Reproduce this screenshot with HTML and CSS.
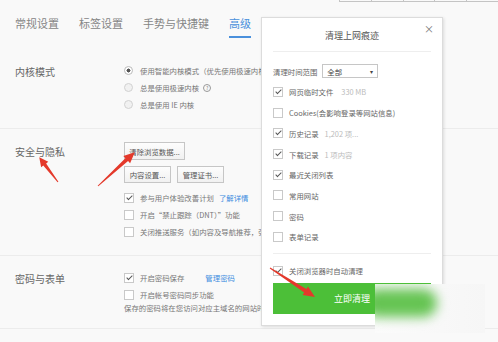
FILE: index.html
```html
<!DOCTYPE html>
<html lang="zh-CN">
<head>
    <meta charset="UTF-8">
    <meta name="viewport" content="width=device-width, initial-scale=1.0">
    <title>高级设置</title>
    <link rel="stylesheet" href="styles.css">
</head>
<body>
<div class="page">
    <div class="toolbar"><span></span><span></span><span></span><span></span><span></span></div>
    <nav class="tabs">
        <span class="tab">常规设置</span>
        <span class="tab">标签设置</span>
        <span class="tab">手势与快捷键</span>
        <span class="tab active">高级</span>
    </nav>

    <section class="group kernel">
        <div class="label">内核模式</div>
        <div class="options">
            <div class="row"><i class="radio on"></i>使用智能内核模式（优先使用极速内核）</div>
            <div class="row"><i class="radio"></i>总是使用极速内核<span class="help">?</span></div>
            <div class="row"><i class="radio"></i>总是使用 IE 内核</div>
        </div>
    </section>

    <section class="group">
        <div class="label">安全与隐私</div>
        <div class="options">
            <div class="btn-row first"><span class="btn wide">清除浏览数据...</span></div>
            <div class="btn-row"><span class="btn">内容设置...</span><span class="btn">管理证书...</span></div>
            <div class="row"><i class="cb on"></i>参与用户体验改善计划<a class="link">了解详情</a></div>
            <div class="row"><i class="cb"></i>开启“禁止跟踪（DNT）”功能</div>
            <div class="row"><i class="cb"></i>关闭推送服务（如内容及导航推荐，弹窗等）</div>
        </div>
    </section>

    <section class="group">
        <div class="label">密码与表单</div>
        <div class="options">
            <div class="row"><i class="cb on"></i>开启密码保存<a class="link far">管理密码</a></div>
            <div class="row"><i class="cb"></i>开启帐号密码同步功能</div>
            <div class="note">保存的密码将在您访问对应主域名的网站时自动填充</div>
        </div>
    </section>
</div>

<div class="dialog">
    <span class="close">×</span>
    <div class="dlg-title">清理上网痕迹</div>
    <div class="range">
        清理时间范围
        <span class="select">全部<b>▾</b></span>
    </div>
    <div class="items">
        <div class="item"><i class="cb on"></i>网页临时文件<em class="size">330 MB</em></div>
        <div class="item"><i class="cb"></i>Cookies(会影响登录等网站信息)</div>
        <div class="item"><i class="cb on"></i>历史记录<em>1,202 项...</em></div>
        <div class="item"><i class="cb on"></i>下载记录<em>1 项内容</em></div>
        <div class="item"><i class="cb on"></i>最近关闭列表</div>
        <div class="item"><i class="cb"></i>常用网站</div>
        <div class="item"><i class="cb"></i>密码</div>
        <div class="item"><i class="cb"></i>表单记录</div>
    </div>
    <div class="item auto"><i class="cb on"></i>关闭浏览器时自动清理</div>
    <div class="go">立即清理</div>
</div>

<div class="smudge"></div>

<svg class="arrows" width="498" height="342" viewBox="0 0 498 342">
    <g fill="#e4392b">
        <polygon transform="translate(58 182) rotate(-127.2)" points="0,-0.5 22,-1.8 22,-4.5 31,0 22,4.5 22,1.8 0,0.5"/>
        <polygon transform="translate(98 186) rotate(-42.6)" points="0,-0.5 39,-2 39,-5 50,0 39,5 39,2 0,0.5"/>
        <polygon transform="translate(270 268) rotate(32.8)" points="0,-0.5 42,-2 42,-5 53.5,0 42,5 42,2 0,0.5"/>
    </g>
</svg>
</body>
</html>
```

FILE: styles.css
```css
body {
  margin: 0;
  width: 498px;
  height: 342px;
  overflow: hidden;
  position: relative;
  font-family: "Noto Sans CJK SC", sans-serif;
  color: #666;
  background-color: #f9f9f9;
}

.toolbar {
  display: flex;
  margin-left: 339px;
  height: 1px;
  border-bottom: 1px solid #c4c4c4;
}

.toolbar span {
  width: 33px;
  border-left: 1px solid #c4c4c4;
}

.tabs {
  display: flex;
  gap: 20px;
  padding-left: 15px;
}

.tab {
  padding: 14px 0 6px;
  font-size: 11px;
  line-height: 14px;
  color: #858585;
  border-bottom: 2px solid transparent;
}

.tab.active {
  color: #4a90dc;
  border-bottom-color: #4a90dc;
}

.group {
  display: flex;
  padding: 13px 0 15px 15px;
  border-bottom: 1px solid #ececec;
}

.group.kernel {
  padding-top: 24px;
}

.label {
  width: 109px;
  flex: none;
  font-size: 10px;
  line-height: 20px;
  color: #666;
}

.options {
  flex: 1;
  white-space: nowrap;
}

.row {
  display: flex;
  align-items: center;
  height: 17px;
  font-size: 7.4px;
  color: #777;
}

.radio {
  width: 7px;
  height: 7px;
  margin-right: 7px;
  border: 1px solid #d2d2d2;
  border-radius: 50%;
  background: #f1f1f1;
}

.radio.on {
  background: radial-gradient(circle, #555 0 1.8px, #fff 2.2px);
  border-color: #bbb;
}

.cb {
  position: relative;
  width: 8px;
  height: 8px;
  flex: none;
  margin-right: 6px;
  border: 1px solid #c9c9c9;
  background: #fff;
}

.cb.on::after {
  content: "";
  position: absolute;
  left: 2.5px;
  top: 0;
  width: 2px;
  height: 5px;
  border: solid #555;
  border-width: 0 1px 1px 0;
  transform: rotate(45deg);
}

.help {
  display: inline-flex;
  justify-content: center;
  align-items: center;
  width: 6px;
  height: 6px;
  margin-left: 4px;
  border: 1px solid #999;
  border-radius: 50%;
  font-size: 5px;
  color: #888;
}

.link {
  margin-left: 5px;
  color: #3d8de0;
}

.link.far {
  margin-left: 21px;
}

.btn-row {
  display: flex;
  gap: 6px;
  height: 17px;
  margin-bottom: 6px;
}

.btn-row.first {
  height: 18px;
}

.btn {
  display: inline-flex;
  align-items: center;
  justify-content: center;
  box-sizing: border-box;
  width: 47px;
  height: 100%;
  border: 1px solid #c6c6c6;
  background: linear-gradient(#fdfdfd, #f1f1f1);
  font-size: 7.4px;
  color: #555;
}

.btn.wide {
  width: 61px;
}

.note {
  font-size: 7.4px;
  line-height: 10px;
  color: #777;
}

.dialog {
  position: absolute;
  left: 261px;
  top: 17px;
  width: 182px;
  height: 309px;
  box-sizing: border-box;
  padding: 0 11px;
  background: #fff;
  border: 1px solid #dcdcdc;
  box-shadow: 1px 1px 3px rgba(0, 0, 0, 0.12);
  white-space: nowrap;
}

.close {
  position: absolute;
  right: 8px;
  top: 3px;
  font-size: 10px;
  color: #777;
}

.dlg-title {
  padding: 12px 0 9px;
  font-size: 9px;
  line-height: 12px;
  text-align: center;
  color: #555;
  border-bottom: 1px solid #eee;
}

.range {
  display: flex;
  align-items: center;
  height: 14px;
  margin-top: 12px;
  font-size: 7.4px;
  color: #666;
}

.select {
  display: flex;
  align-items: center;
  justify-content: space-between;
  box-sizing: border-box;
  width: 56px;
  height: 14px;
  margin-left: 5px;
  padding: 0 4px;
  border: 1px solid #c6c6c6;
  color: #444;
}

.select b {
  font-weight: normal;
  font-size: 6px;
}

.items {
  margin-top: 3.6px;
  padding-bottom: 5.7px;
  border-bottom: 1px solid #eee;
}

.item {
  display: flex;
  align-items: center;
  height: 20.7px;
  font-size: 7.4px;
  color: #666;
}

.item em {
  font-style: normal;
  margin-left: 6px;
  color: #bbb;
}

.item em.size {
  margin-left: 8px;
}

.item.auto {
  margin-top: 6.6px;
}

.go {
  display: flex;
  align-items: center;
  justify-content: center;
  height: 31px;
  margin-top: 1.7px;
  background: #4cbf38;
  color: #fff;
  font-size: 9px;
}

.smudge {
  position: absolute;
  left: 375px;
  top: 284px;
  width: 110px;
  height: 49px;
  overflow: hidden;
  background: linear-gradient(to right, #fbfbfb, #f6f6f6);
}

.smudge::before {
  content: "";
  position: absolute;
  left: -12px;
  top: 5px;
  width: 74px;
  height: 28px;
  border-radius: 14px;
  background: #66c453;
  filter: blur(6px);
}

.arrows {
  position: absolute;
  left: 0;
  top: 0;
  pointer-events: none;
}
```
